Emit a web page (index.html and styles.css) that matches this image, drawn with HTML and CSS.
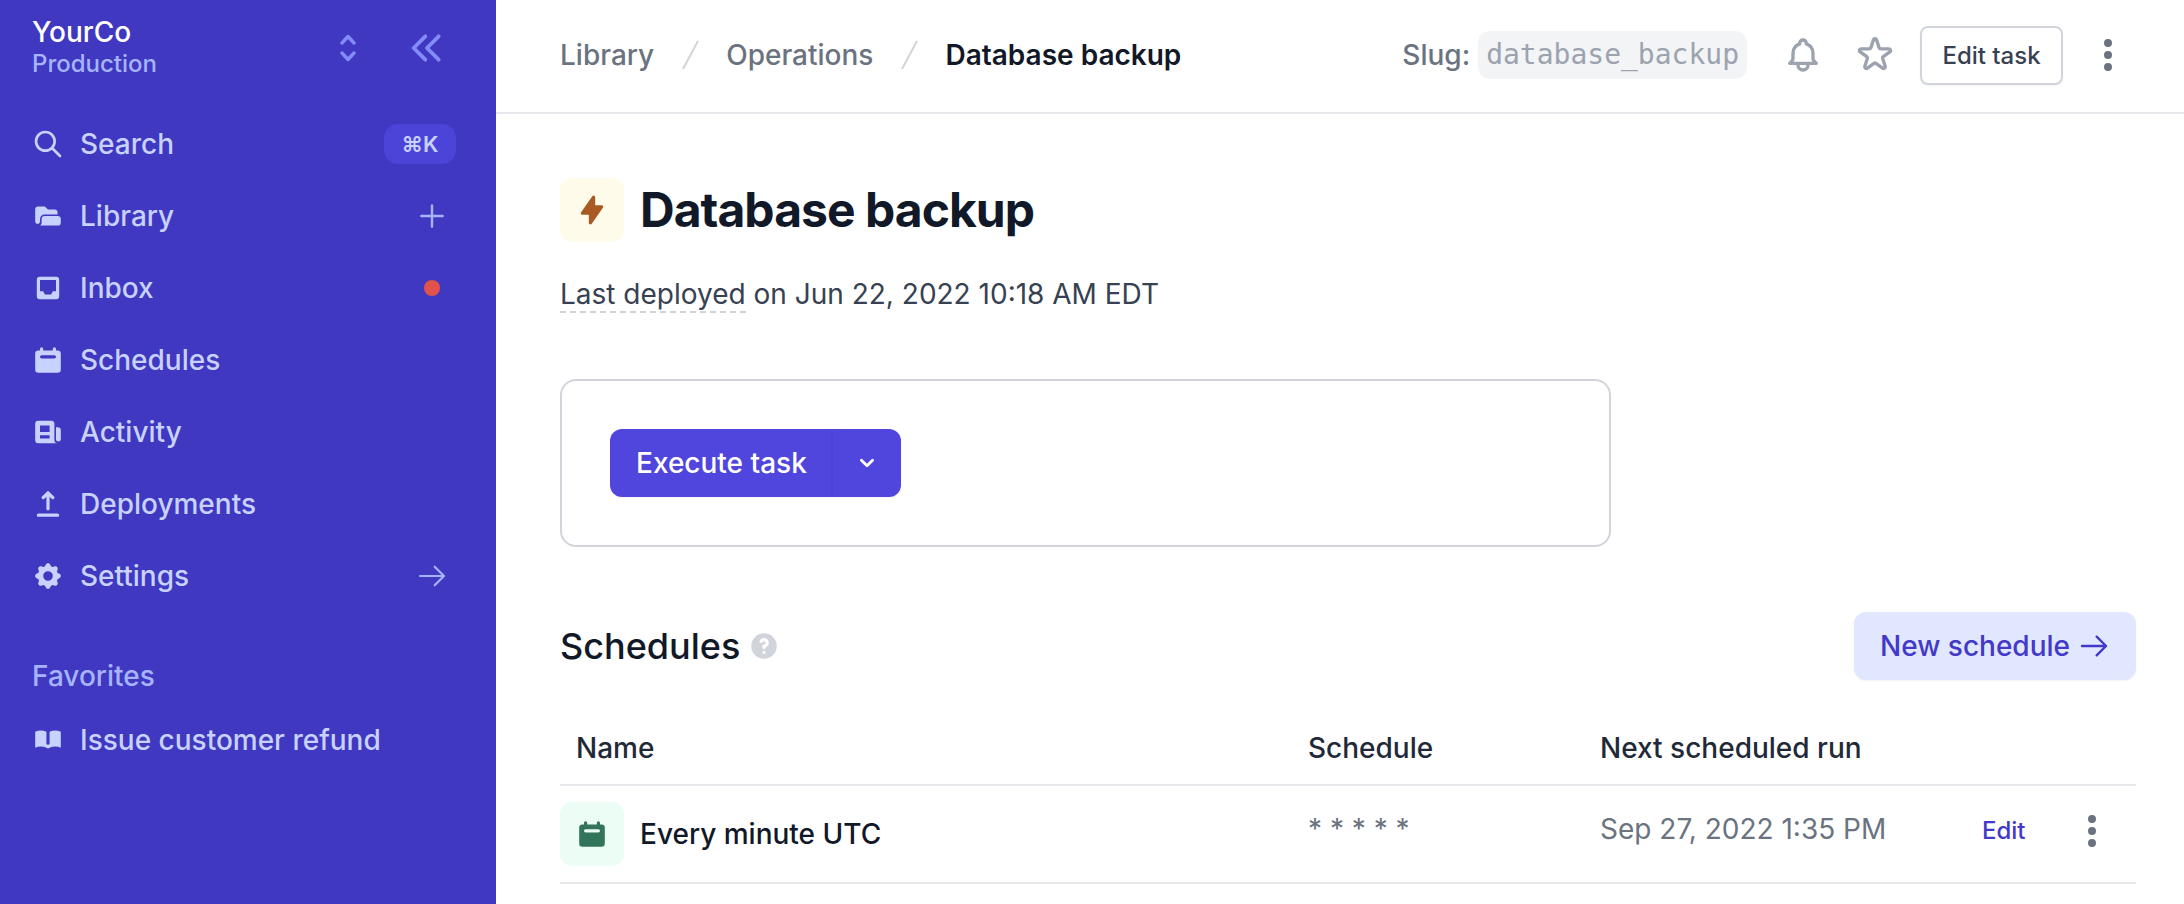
FILE: index.html
```html
<!DOCTYPE html>
<html lang="en">
<head>
    <meta charset="UTF-8">
    <title>Database backup</title>
    <link rel="stylesheet" href="styles.css">
</head>
<body>
    <aside class="sidebar">
        <div class="org">
            <div class="org-name">
                <div class="org-title">YourCo</div>
                <div class="org-env">Production</div>
            </div>
            <svg class="org-switch" viewBox="0 0 16 28" fill="none" stroke="currentColor" stroke-width="3.4" stroke-linecap="round" stroke-linejoin="round"><path d="M2 9l6-6.5 6 6.5M2 19l6 6.5 6-6.5"/></svg>
            <svg class="org-collapse" viewBox="0 0 24 24" fill="none" stroke="currentColor" stroke-width="2.3" stroke-linecap="round" stroke-linejoin="round"><path d="M11 19l-7-7 7-7m8 14l-7-7 7-7"/></svg>
        </div>

        <nav>
            <a class="nav-item">
                <svg class="nav-icon" viewBox="0 0 24 24" fill="none" stroke="currentColor" stroke-width="2" stroke-linecap="round" stroke-linejoin="round"><path d="M21 21l-6-6m2-5a7 7 0 11-14 0 7 7 0 0114 0z"/></svg>
                <span class="nav-label">Search</span>
                <kbd class="shortcut">⌘K</kbd>
            </a>
            <a class="nav-item">
                <svg class="nav-icon" viewBox="0 0 20 20" fill="currentColor"><path fill-rule="evenodd" d="M2 6a2 2 0 012-2h4l2 2h4a2 2 0 012 2v1H8a3 3 0 00-3 3v1.5a1.5 1.5 0 01-3 0V6z" clip-rule="evenodd"/><path d="M6 12a2 2 0 012-2h8a2 2 0 012 2v2a2 2 0 01-2 2H2h2a2 2 0 002-2v-2z"/></svg>
                <span class="nav-label">Library</span>
                <span class="nav-extra"><svg class="extra-icon" viewBox="0 0 24 24" fill="none" stroke="currentColor" stroke-width="1.8" stroke-linecap="round"><path d="M12 4v16m8-8H4"/></svg></span>
            </a>
            <a class="nav-item">
                <svg class="nav-icon" viewBox="0 0 20 20" fill="currentColor"><path fill-rule="evenodd" d="M5 3a2 2 0 00-2 2v10a2 2 0 002 2h10a2 2 0 002-2V5a2 2 0 00-2-2H5zm0 2h10v7h-2l-1 2H8l-1-2H5V5z" clip-rule="evenodd"/></svg>
                <span class="nav-label">Inbox</span>
                <span class="nav-extra"><span class="dot"></span></span>
            </a>
            <a class="nav-item">
                <svg class="nav-icon" viewBox="0 0 20 20" fill="currentColor"><path fill-rule="evenodd" d="M6 2a1 1 0 00-1 1v1H4a2 2 0 00-2 2v10a2 2 0 002 2h12a2 2 0 002-2V6a2 2 0 00-2-2h-1V3a1 1 0 10-2 0v1H7V3a1 1 0 00-1-1zm0 5a1 1 0 000 2h8a1 1 0 100-2H6z" clip-rule="evenodd"/></svg>
                <span class="nav-label">Schedules</span>
            </a>
            <a class="nav-item">
                <svg class="nav-icon" viewBox="0 0 20 20" fill="currentColor"><path fill-rule="evenodd" d="M2 5a2 2 0 012-2h8a2 2 0 012 2v10a2 2 0 002 2H4a2 2 0 01-2-2V5zm3 1h6v4H5V6zm6 6H5v2h6v-2z" clip-rule="evenodd"/><path d="M15 7h1a2 2 0 012 2v5.5a1.5 1.5 0 01-3 0V7z"/></svg>
                <span class="nav-label">Activity</span>
            </a>
            <a class="nav-item">
                <svg class="nav-icon" viewBox="0 0 20 20" fill="currentColor"><path fill-rule="evenodd" d="M3 17a1 1 0 011-1h12a1 1 0 110 2H4a1 1 0 01-1-1zM6.293 6.707a1 1 0 010-1.414l3-3a1 1 0 011.414 0l3 3a1 1 0 01-1.414 1.414L11 5.414V13a1 1 0 11-2 0V5.414L7.707 6.707a1 1 0 01-1.414 0z" clip-rule="evenodd"/></svg>
                <span class="nav-label">Deployments</span>
            </a>
            <a class="nav-item">
                <svg class="nav-icon" viewBox="0 0 20 20" fill="currentColor"><path fill-rule="evenodd" d="M11.49 3.17c-.38-1.56-2.6-1.56-2.98 0a1.532 1.532 0 01-2.286.948c-1.372-.836-2.942.734-2.106 2.106.54.886.061 2.042-.947 2.287-1.561.379-1.561 2.6 0 2.978a1.532 1.532 0 01.947 2.287c-.836 1.372.734 2.942 2.106 2.106a1.532 1.532 0 012.287.947c.379 1.561 2.6 1.561 2.978 0a1.533 1.533 0 012.287-.947c1.372.836 2.942-.734 2.106-2.106a1.533 1.533 0 01.947-2.287c1.561-.379 1.561-2.6 0-2.978a1.532 1.532 0 01-.947-2.287c.836-1.372-.734-2.942-2.106-2.106a1.532 1.532 0 01-2.287-.947zM10 13a3 3 0 100-6 3 3 0 000 6z" clip-rule="evenodd"/></svg>
                <span class="nav-label">Settings</span>
                <span class="nav-extra"><svg class="extra-icon" viewBox="0 0 24 24" fill="none" stroke="currentColor" stroke-width="1.6" stroke-linecap="round" stroke-linejoin="round"><path d="M14 5l7 7m0 0l-7 7m7-7H3"/></svg></span>
            </a>
        </nav>

        <div class="nav-heading">Favorites</div>
        <a class="nav-item">
            <svg class="nav-icon" viewBox="0 0 20 20" fill="currentColor"><path d="M9 4.804A7.968 7.968 0 005.5 4c-1.255 0-2.443.29-3.5.804v10A7.969 7.969 0 015.5 14c1.669 0 3.218.51 4.5 1.385A7.962 7.962 0 0114.5 14c1.255 0 2.443.29 3.5.804v-10A7.968 7.968 0 0014.5 4c-1.255 0-2.443.29-3.5.804V12a1 1 0 11-2 0V4.804z"/></svg>
            <span class="nav-label">Issue customer refund</span>
        </a>
    </aside>

    <div class="main">
        <header class="topbar">
            <div class="crumbs">
                <a class="crumb">Library</a>
                <svg class="crumb-sep" viewBox="0 0 24 32" fill="none" stroke="currentColor" stroke-width="2"><path d="M20 2L5 30"/></svg>
                <a class="crumb">Operations</a>
                <svg class="crumb-sep" viewBox="0 0 24 32" fill="none" stroke="currentColor" stroke-width="2"><path d="M20 2L5 30"/></svg>
                <span class="crumb crumb-current">Database backup</span>
            </div>
            <div class="top-actions">
                <span class="slug-label">Slug:</span>
                <code class="slug">database_backup</code>
                <svg class="top-icon bell" viewBox="0 0 24 24" fill="none" stroke="currentColor" stroke-width="2" stroke-linecap="round" stroke-linejoin="round"><path d="M15 17h5l-1.405-1.405A2.032 2.032 0 0118 14.158V11a6.002 6.002 0 00-4-5.659V5a2 2 0 10-4 0v.341C7.67 6.165 6 8.388 6 11v3.159c0 .538-.214 1.055-.595 1.436L4 17h5m6 0v1a3 3 0 11-6 0v-1m6 0H9"/></svg>
                <svg class="top-icon star" viewBox="0 0 24 24" fill="none" stroke="currentColor" stroke-width="2" stroke-linecap="round" stroke-linejoin="round"><path d="M11.049 2.927c.3-.921 1.603-.921 1.902 0l1.519 4.674a1 1 0 00.95.69h4.915c.969 0 1.371 1.24.588 1.81l-3.976 2.888a1 1 0 00-.363 1.118l1.518 4.674c.3.922-.755 1.688-1.538 1.118l-3.976-2.888a1 1 0 00-1.176 0l-3.976 2.888c-.783.57-1.838-.197-1.538-1.118l1.518-4.674a1 1 0 00-.363-1.118l-3.975-2.888c-.784-.57-.38-1.81.588-1.81h4.914a1 1 0 00.951-.69l1.519-4.674z"/></svg>
                <button class="edit-task">Edit task</button>
                <svg class="dots top-dots" viewBox="0 0 20 20" fill="currentColor"><path d="M10 6a2 2 0 110-4 2 2 0 010 4zM10 12a2 2 0 110-4 2 2 0 010 4zM10 18a2 2 0 110-4 2 2 0 010 4z"/></svg>
            </div>
        </header>

        <main class="content">
            <div class="title-row">
                <span class="tile tile-yellow">
                    <svg viewBox="0 0 20 20" fill="currentColor"><path fill-rule="evenodd" d="M11.3 1.046A1 1 0 0112 2v5h4a1 1 0 01.82 1.573l-7 10A1 1 0 018 18v-5H4a1 1 0 01-.82-1.573l7-10a1 1 0 011.12-.38z" clip-rule="evenodd"/></svg>
                </span>
                <h1>Database backup</h1>
            </div>
            <p class="deployed"><span class="dashed">Last deployed</span> on Jun 22, 2022 10:18 AM EDT</p>

            <div class="card">
                <div class="execute">
                    <span class="execute-label">Execute task</span>
                    <span class="execute-more">
                        <svg viewBox="0 0 20 20" fill="currentColor"><path fill-rule="evenodd" d="M5.293 7.293a1 1 0 011.414 0L10 10.586l3.293-3.293a1 1 0 111.414 1.414l-4 4a1 1 0 01-1.414 0l-4-4a1 1 0 010-1.414z" clip-rule="evenodd"/></svg>
                    </span>
                </div>
            </div>

            <div class="section-head">
                <h2>Schedules</h2>
                <svg class="help" viewBox="0 0 20 20" fill="currentColor"><path fill-rule="evenodd" d="M18 10a8 8 0 11-16 0 8 8 0 0116 0zm-8-3a1 1 0 00-.867.5 1 1 0 11-1.731-1A3 3 0 0113 8a3.001 3.001 0 01-2 2.83V11a1 1 0 11-2 0v-1a1 1 0 011-1 1 1 0 100-2zm0 8a1 1 0 100-2 1 1 0 000 2z" clip-rule="evenodd"/></svg>
                <button class="new-schedule">New schedule
                    <svg viewBox="0 0 24 24" fill="none" stroke="currentColor" stroke-width="1.8" stroke-linecap="round" stroke-linejoin="round"><path d="M14 5l7 7m0 0l-7 7m7-7H3"/></svg>
                </button>
            </div>

            <table class="schedules">
                <thead>
                    <tr>
                        <th class="col-name">Name</th>
                        <th class="col-cron">Schedule</th>
                        <th class="col-next">Next scheduled run</th>
                        <th></th>
                    </tr>
                </thead>
                <tbody>
                    <tr>
                        <td>
                            <div class="row-name">
                                <span class="tile tile-green">
                                    <svg viewBox="0 0 20 20" fill="currentColor"><path fill-rule="evenodd" d="M6 2a1 1 0 00-1 1v1H4a2 2 0 00-2 2v10a2 2 0 002 2h12a2 2 0 002-2V6a2 2 0 00-2-2h-1V3a1 1 0 10-2 0v1H7V3a1 1 0 00-1-1zm0 5a1 1 0 000 2h8a1 1 0 100-2H6z" clip-rule="evenodd"/></svg>
                                </span>
                                Every minute UTC
                            </div>
                        </td>
                        <td class="muted">* * * * *</td>
                        <td class="muted">Sep 27, 2022 1:35 PM</td>
                        <td>
                            <div class="row-actions">
                                <a class="edit-link">Edit</a>
                                <svg class="dots" viewBox="0 0 20 20" fill="currentColor"><path d="M10 6a2 2 0 110-4 2 2 0 010 4zM10 12a2 2 0 110-4 2 2 0 010 4zM10 18a2 2 0 110-4 2 2 0 010 4z"/></svg>
                            </div>
                        </td>
                    </tr>
                </tbody>
            </table>
        </main>
    </div>
</body>
</html>
```

FILE: styles.css
```css
* { box-sizing: border-box; }

html, body { height: 100%; }

body {
    margin: 0;
    display: flex;
    overflow: hidden;
    font-family: Inter, "Liberation Sans", sans-serif;
    font-size: 28px;
    line-height: 40px;
    color: #111827;
    background-color: #fff;
}

/* sidebar */
.sidebar {
    flex: 0 0 496px;
    height: 100%;
    padding-right: 40px;
    background-color: #4038c0;
    color: #c7d2fe;
    font-weight: 500;
}

.org {
    display: flex;
    align-items: center;
    height: 96px;
    padding-left: 32px;
    margin-bottom: 12px;
}

.org-name { flex: 1; }
.org-title { color: #fff; line-height: 32px; }
.org-env { color: #a5b4fc; font-size: 24px; line-height: 32px; }

.org-switch { width: 16px; height: 28px; color: #818cf8; }
.org-collapse { width: 40px; height: 40px; margin: 0 9px 0 51px; color: #818cf8; }

.nav-item {
    display: flex;
    align-items: center;
    height: 72px;
    padding-left: 32px;
}

.nav-icon { width: 32px; height: 32px; margin-right: 16px; flex: none; }
.nav-label { flex: 1; }

.nav-extra {
    display: flex;
    justify-content: center;
    align-items: center;
    width: 48px;
}

.extra-icon { width: 32px; height: 32px; color: #a5b4fc; }

.dot {
    width: 16px;
    height: 16px;
    border-radius: 50%;
    background-color: #e0524a;
}

.shortcut {
    width: 72px;
    height: 40px;
    border-radius: 14px;
    background-color: #4c44d8;
    font-family: inherit;
    font-size: 22px;
    font-weight: 600;
    line-height: 40px;
    text-align: center;
}

.nav-heading {
    margin-top: 44px;
    padding-left: 32px;
    height: 40px;
    color: #a5b4fc;
}

.nav-heading + .nav-item { margin-top: 8px; }

/* top bar */
.main { flex: 1; min-width: 0; }

.topbar {
    display: flex;
    justify-content: space-between;
    align-items: center;
    height: 114px;
    padding: 0 56px 2px 64px;
    border-bottom: 2px solid #e5e7eb;
}

.crumbs { display: flex; align-items: center; gap: 24px; }
.crumb { color: #6b7280; font-weight: 500; }
.crumb-current { color: #111827; font-weight: 600; }
.crumb-sep { width: 24px; height: 32px; color: #d1d5db; }

.top-actions { display: flex; align-items: center; }

.slug-label { margin-right: 8px; color: #6b7280; font-weight: 500; }

.slug {
    height: 48px;
    padding: 0 8px;
    margin-right: 36px;
    border-radius: 12px;
    background-color: #f3f4f6;
    color: #9ca3af;
    font-family: "DejaVu Sans Mono", monospace;
    font-size: 28px;
    line-height: 48px;
}

.top-icon { width: 40px; height: 40px; color: #9ca3af; }
.bell { margin-right: 32px; }
.star { margin-right: 25px; }

.edit-task {
    width: 143px;
    height: 59px;
    padding: 0;
    border: 2px solid #d1d5db;
    border-radius: 8px;
    background-color: #fff;
    box-shadow: 0 1px 2px rgba(0, 0, 0, 0.05);
    color: #374151;
    font: 500 24px Inter, sans-serif;
}

.dots { width: 40px; height: 40px; color: #6b7280; flex: none; }
.top-dots { margin-left: 25px; }

/* content */
.content { padding: 64px 48px 0 64px; }

.title-row { display: flex; align-items: center; gap: 16px; }

.tile {
    display: flex;
    justify-content: center;
    align-items: center;
    flex: none;
    width: 64px;
    height: 64px;
    border-radius: 12px;
}

.tile svg { width: 32px; height: 32px; }
.tile-yellow { background-color: #fffbeb; color: #a95a24; }
.tile-green { background-color: #ecfdf5; color: #33755a; }

h1 {
    margin: 0;
    font-size: 48px;
    font-weight: 700;
    line-height: 64px;
    letter-spacing: -0.96px;
}

.deployed { margin: 32px 0 0; color: #374151; }
.dashed { border-bottom: 2px dashed #d1d5db; }

.card {
    width: 1051px;
    margin-top: 65px;
    padding: 48px;
    border: 2px solid #d1d5db;
    border-radius: 16px;
}

.execute {
    display: inline-flex;
    height: 68px;
    border-radius: 12px;
    background-color: #5046dd;
    box-shadow: 0 1px 2px rgba(0, 0, 0, 0.05);
    color: #fff;
    font-weight: 500;
    line-height: 68px;
}

.execute-label { padding: 0 24px 0 26px; border-right: 2px solid #4c42d4; }

.execute-more {
    display: flex;
    justify-content: center;
    align-items: center;
    width: 68px;
}

.execute-more svg { width: 28px; height: 28px; }

.section-head {
    display: flex;
    align-items: center;
    margin-top: 65px;
}

h2 { margin: 0; font-size: 36px; font-weight: 500; line-height: 48px; }

.help { width: 32px; height: 32px; margin-left: 8px; color: #d1d5db; }

.new-schedule {
    display: flex;
    align-items: center;
    gap: 8px;
    height: 68px;
    padding: 0 26px;
    margin-left: auto;
    border: 0;
    border-radius: 12px;
    background-color: #e0e7ff;
    box-shadow: 0 1px 2px rgba(0, 0, 0, 0.05);
    color: #4338ca;
    font: 500 28px Inter, sans-serif;
}

.new-schedule svg { width: 32px; height: 32px; }

/* table */
.schedules {
    width: 100%;
    margin-top: 32px;
    border-collapse: separate;
    border-spacing: 0;
    table-layout: fixed;
}

.col-name { width: 732px; }
.col-cron { width: 292px; }
.col-next { width: 382px; }

th {
    height: 74px;
    padding: 0 16px;
    border-bottom: 2px solid #e5e7eb;
    color: #1f2937;
    font-weight: 500;
    text-align: left;
}

td {
    height: 98px;
    padding: 0 16px;
    border-bottom: 2px solid #e5e7eb;
}

td:first-child { padding-left: 0; }

.muted { padding-bottom: 10px; color: #6b7280; }

.row-name { display: flex; align-items: center; gap: 16px; font-weight: 500; }

.row-actions { display: flex; align-items: center; margin-bottom: 6px; }

.edit-link { width: 90px; color: #4338ca; font-size: 24px; font-weight: 500; }
.row-actions .dots { margin-left: 0; }
```
